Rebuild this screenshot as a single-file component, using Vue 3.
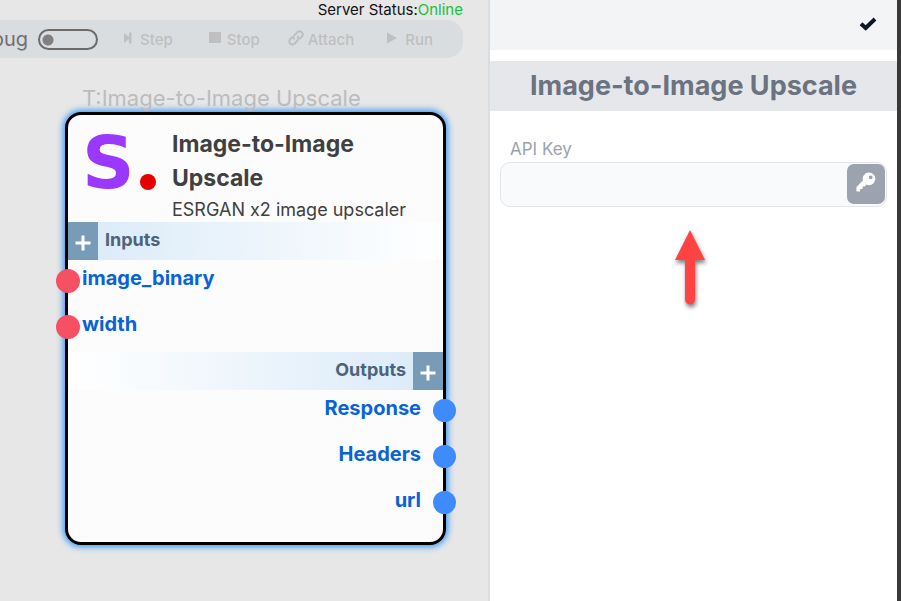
<script setup>
import { ref } from 'vue'

const debug = ref(false)
const apiKey = ref('')
const inputs = ['image_binary', 'width']
const outputs = ['Response', 'Headers', 'url']
</script>

<template>
  <div class="app">
    <main class="canvas">
      <p class="status">Server Status:<span class="online">Online</span></p>
      <div class="toolbar">
        <label class="debug">
          Debug
          <input v-model="debug" class="switch" type="checkbox" />
        </label>
        <button class="tool step" disabled>
          <svg width="8" height="12" viewBox="0 0 8 12"><path d="M0 1v10l5-4v4.500h2.500V.5H5v4.500z" /></svg>
          Step
        </button>
        <button class="tool stop" disabled>
          <svg width="12" height="12" viewBox="0 0 12 12"><path d="M0 0h12v11H0z" /></svg>
          Stop
        </button>
        <button class="tool attach" disabled>
          <svg width="16" height="16" viewBox="0 0 16 16" class="link"><path d="M6.500 9.500C5 8 5.300 6.300 6.500 5.100L9.300 2.300a3.050 3.050 0 0 1 4.400 4.400L11.500 8.900M9.300 6.300c1.500 1.500 1.300 3.200.1 4.400L6.600 13.500a3.050 3.050 0 0 1-4.400-4.400l2.100-2.100" /></svg>
          Attach
        </button>
        <button class="tool run" disabled>
          <svg width="10" height="12" viewBox="0 0 10 12"><path d="M0 .5v11L10 6z" /></svg>
          Run
        </button>
      </div>

      <article class="node">
        <div class="node-type">T:Image-to-Image Upscale</div>
        <div class="node-card">
          <header class="node-head">
            <div class="logo"><span class="logo-letter">S</span><span class="logo-dot"></span></div>
            <div class="node-info">
              <h2>Image-to-Image Upscale</h2>
              <p>ESRGAN x2 image upscaler</p>
            </div>
          </header>
          <div class="band">
            <button class="add" aria-label="Add input">
              <svg width="16" height="16" viewBox="0 0 16 16"><path d="M8 0.500v15M.5 8h15" /></svg>
            </button>
            <span>Inputs</span>
          </div>
          <ul class="ports">
            <li v-for="name in inputs" :key="name"><i class="pin"></i>{{ name }}</li>
          </ul>
          <div class="band out">
            <button class="add" aria-label="Add output">
              <svg width="16" height="16" viewBox="0 0 16 16"><path d="M8 0.500v15M.5 8h15" /></svg>
            </button>
            <span>Outputs</span>
          </div>
          <ul class="ports out">
            <li v-for="name in outputs" :key="name"><i class="pin"></i>{{ name }}</li>
          </ul>
        </div>
      </article>
    </main>

    <aside class="panel">
      <div class="panel-bar">
        <button class="confirm" aria-label="Confirm">
          <svg width="18" height="14" viewBox="0 0 18 14"><path d="M2 6.800 6.700 11 16 2" /></svg>
        </button>
      </div>
      <h1>Image-to-Image Upscale</h1>
      <div class="field">
        <label for="api-key">API Key</label>
        <div class="key-box">
          <input id="api-key" v-model="apiKey" type="text" />
          <button class="key-button" aria-label="Choose key">
            <svg width="20" height="20" viewBox="0 0 20 20"><path fill-rule="evenodd" d="M13 .5a6.300 6.300 0 0 0-6.100 8L.7 14.700a1 1 0 0 0-.3.700v3.300q0 .8.800.8h2.300q.6 0 .6-.6v-1.800h1.900q.6 0 .6-.6v-2h1.800q.4 0 .6-.3l1.500-1.600a6.300 6.300 0 1 0 2.500-12.100zM14.700 3.400a1.900 1.900 0 1 1 0 3.800 1.900 1.900 0 0 1 0-3.800z" /></svg>
          </button>
        </div>
      </div>
      <svg class="pointer" width="50" height="90" viewBox="0 0 50 90">
        <path d="M25 9 40 39H30v39.500a5 5 0 0 1-10 0V39H10z" />
      </svg>
    </aside>
  </div>
</template>

<style>
body {
  margin: 0;
}
</style>

<style scoped>
.app {
  display: flex;
  box-sizing: border-box;
  min-height: 100vh;
  border-right: 4px solid #393939;
  font-family: Inter, "Liberation Sans", sans-serif;
  background: #fff;
}

.app * {
  box-sizing: border-box;
}

button {
  display: flex;
  align-items: center;
  justify-content: center;
  padding: 0;
  border: 0;
  background: none;
  font: inherit;
}

h1,
h2,
p,
ul {
  margin: 0;
  padding: 0;
}

.canvas {
  position: relative;
  flex: 1;
  min-width: 0;
  overflow: hidden;
  display: flex;
  flex-direction: column;
  align-items: flex-end;
  padding-right: 25px;
  background: #e7e7e7;
}

.status {
  font-size: 15px;
  line-height: 20px;
  color: #111;
}

.online {
  color: #16c13c;
}

.toolbar {
  display: flex;
  flex-shrink: 0;
  align-items: center;
  height: 38px;
  padding: 0 30px 0 40px;
  border-radius: 16px;
  background: #d9dde0;
}

.debug {
  display: flex;
  align-items: center;
  gap: 10px;
  margin-right: 26px;
  font-size: 20px;
  color: #6f6f6f;
}

.switch {
  appearance: none;
  width: 60px;
  height: 21px;
  margin: 0;
  border: 2px solid #6b6b6b;
  border-radius: 11px;
  background: radial-gradient(circle at 8px 9px, #808080 5px, transparent 6px);
}

.switch:checked {
  background: radial-gradient(circle at 48px 9px, #16c13c 5px, transparent 6px);
}

.tool {
  gap: 8px;
  font-size: 15px;
  font-weight: 500;
  color: #bfbfbf;
}

.tool svg {
  margin-bottom: 2px;
  fill: #bfbfbf;
}

.tool .link {
  fill: none;
  stroke: #bfbfbf;
  stroke-width: 2;
}

.step {
  margin-right: 36px;
}

.stop {
  gap: 6px;
  margin-right: 28px;
}

.attach {
  gap: 4px;
  margin-right: 33px;
}

.node {
  position: absolute;
  left: 65px;
  top: 84px;
  width: 381px;
}

.node-type {
  padding-left: 17px;
  font-size: 22px;
  line-height: 28px;
  color: #bcbcbc;
}

.node-card {
  padding-bottom: 14px;
  border: 3px solid #000;
  border-radius: 16px;
  background: #fcfcfc;
  box-shadow: 0 0 6px 2px #3b99f5;
}

.node-head {
  display: flex;
  gap: 16px;
  padding: 12px 18px 0 14px;
  height: 107px;
}

.logo {
  display: flex;
  align-items: flex-end;
  gap: 5px;
  flex-shrink: 0;
  width: 74px;
  height: 63px;
}

.logo-letter {
  font-family: "DejaVu Sans", sans-serif;
  font-size: 73px;
  font-weight: 700;
  line-height: 54px;
  color: #9a38ff;
}

.logo-dot {
  width: 16px;
  height: 16px;
  flex-shrink: 0;
  border-radius: 50%;
  background: #e60000;
}

h2 {
  font-size: 23px;
  font-weight: 700;
  line-height: 34px;
  color: #404040;
}

.node-info p {
  font-size: 18px;
  line-height: 30px;
  white-space: nowrap;
  color: #404040;
}

.band {
  display: flex;
  gap: 7px;
  height: 38px;
  font-size: 18px;
  font-weight: 700;
  line-height: 35px;
  color: #4d637b;
  background: linear-gradient(to right, #d9eaf8, #fff);
}

.band.out {
  flex-direction: row-reverse;
  background: linear-gradient(to left, #d9eaf8, #fff);
}

.add {
  width: 30px;
  padding-top: 4px;
  background: #789bb7;
}

.add svg {
  stroke: #fff;
  stroke-width: 3;
}

.ports {
  list-style: none;
  font-size: 20px;
  font-weight: 700;
  line-height: 37px;
  color: #0862d8;
}

.ports li {
  display: flex;
  gap: 2px;
  height: 46px;
  margin-left: -12px;
}

.pin {
  width: 24px;
  height: 24px;
  margin-top: 9px;
  border-radius: 50%;
  background: #f55064;
}

.ports.out li {
  flex-direction: row-reverse;
  gap: 12px;
  margin: 0 -13px 0 0;
}

.ports.out .pin {
  width: 23px;
  height: 23px;
  background: #3d8bfd;
}

.panel {
  width: 45.6%;
  min-width: 0;
  display: flex;
  flex-direction: column;
  border-left: 2px solid #d9dee3;
  background: #fff;
}

.panel-bar {
  display: flex;
  justify-content: flex-end;
  align-items: center;
  height: 50px;
  padding: 0 20px 2px;
  background: #f3f4f6;
}

.confirm path {
  fill: none;
  stroke: #0f172a;
  stroke-width: 4;
}

h1 {
  margin-top: 11px;
  font-size: 27px;
  font-weight: 700;
  line-height: 50px;
  text-align: center;
  color: #6b7280;
  background: #e5e7eb;
}

.field {
  padding: 25px 10px 0;
}

.field label {
  display: block;
  padding-left: 10px;
  font-size: 17px;
  line-height: 26px;
  color: #9ca3af;
}

.key-box {
  display: flex;
  height: 45px;
  padding: 1px;
  border: 1px solid #e2e5ea;
  border-radius: 10px;
  background: #f9fafb;
}

.key-box input {
  flex: 1;
  min-width: 0;
  padding: 0 12px;
  border: 0;
  outline: 0;
  background: none;
  font: inherit;
}

.key-button {
  width: 38px;
  height: 40px;
  padding-bottom: 4px;
  border-radius: 7px;
  background: #9ca3af;
}

.key-button svg {
  fill: #fff;
}

.pointer {
  align-self: center;
  margin: 14px 7px 0 0;
  overflow: visible;
  filter: drop-shadow(1px 3px 2px rgba(0, 0, 0, 0.5));
}

.pointer path {
  fill: #ff4242;
}
</style>
